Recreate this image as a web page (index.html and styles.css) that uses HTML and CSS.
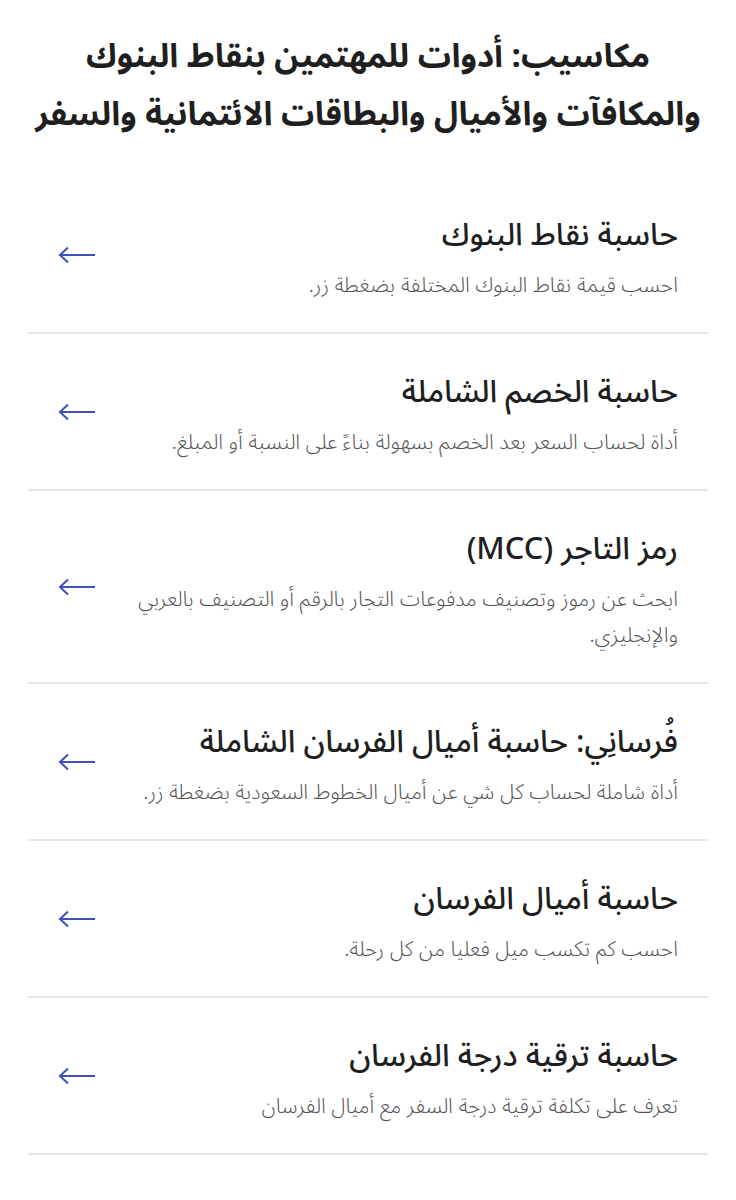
FILE: index.html
```html
<!DOCTYPE html>
<html lang="ar" dir="rtl">
<head>
<meta charset="utf-8" />
<title>مكاسيب: أدوات</title>
<link rel="stylesheet" href="styles.css">
</head>
<body>

<main class="page">
	<h1 class="page-title">مكاسيب: أدوات للمهتمين بنقاط البنوك<br>والمكافآت والأميال والبطاقات الائتمانية والسفر</h1>

	<ul class="tools">
		<li>
			<a class="tool" href="#">
				<div class="tool-text">
					<h2>حاسبة نقاط البنوك</h2>
					<p>احسب قيمة نقاط البنوك المختلفة بضغطة زر.</p>
				</div>
				<span class="arrow"><svg viewBox="0 0 38 18"><path d="M37 9H2M10 1.5L2 9L10 16.5"/></svg></span>
			</a>
		</li>
		<li>
			<a class="tool" href="#">
				<div class="tool-text">
					<h2>حاسبة الخصم الشاملة</h2>
					<p>أداة لحساب السعر بعد الخصم بسهولة بناءً على النسبة أو المبلغ.</p>
				</div>
				<span class="arrow"><svg viewBox="0 0 38 18"><path d="M37 9H2M10 1.5L2 9L10 16.5"/></svg></span>
			</a>
		</li>
		<li>
			<a class="tool" href="#">
				<div class="tool-text">
					<h2>رمز التاجر (MCC)</h2>
					<p>ابحث عن رموز وتصنيف مدفوعات التجار بالرقم أو التصنيف بالعربي والإنجليزي.</p>
				</div>
				<span class="arrow"><svg viewBox="0 0 38 18"><path d="M37 9H2M10 1.5L2 9L10 16.5"/></svg></span>
			</a>
		</li>
		<li>
			<a class="tool" href="#">
				<div class="tool-text">
					<h2>فُرسانِي: حاسبة أميال الفرسان الشاملة</h2>
					<p>أداة شاملة لحساب كل شي عن أميال الخطوط السعودية بضغطة زر.</p>
				</div>
				<span class="arrow"><svg viewBox="0 0 38 18"><path d="M37 9H2M10 1.5L2 9L10 16.5"/></svg></span>
			</a>
		</li>
		<li>
			<a class="tool" href="#">
				<div class="tool-text">
					<h2>حاسبة أميال الفرسان</h2>
					<p>احسب كم تكسب ميل فعليا من كل رحلة.</p>
				</div>
				<span class="arrow"><svg viewBox="0 0 38 18"><path d="M37 9H2M10 1.5L2 9L10 16.5"/></svg></span>
			</a>
		</li>
		<li>
			<a class="tool" href="#">
				<div class="tool-text">
					<h2>حاسبة ترقية درجة الفرسان</h2>
					<p>تعرف على تكلفة ترقية درجة السفر مع أميال الفرسان</p>
				</div>
				<span class="arrow"><svg viewBox="0 0 38 18"><path d="M37 9H2M10 1.5L2 9L10 16.5"/></svg></span>
			</a>
		</li>
	</ul>
</main>

</body>
</html>
```

FILE: styles.css
```css
body {
	margin: 0;
	background: #fff;
	color: #1f1f1f;
	font-family: "Noto Sans Arabic", "Noto Sans", "DejaVu Sans", sans-serif;
}

.page {
	padding: 28px 28px 0;
}

.page-title {
	margin: 0 0 33px;
	font-size: 33px;
	font-weight: 700;
	line-height: 58px;
	text-align: center;
}

/* --------------------------------- */

.tools {
	list-style: none;
	margin: 0;
	padding: 0;
}
.tools li {
	border-bottom: 2px solid #e6e6e6;
}

.tool {
	display: flex;
	align-items: center;
	gap: 22px;
	padding: 36px 30px 29px;
	color: inherit;
	text-decoration: none;
}

.tool-text {
	flex: 1;
}
.tool-text h2 {
	margin: 0 0 10px;
	font-size: 31px;
	font-weight: 500;
	line-height: 44px;
}
.tool-text p {
	margin: 0;
	font-size: 21px;
	font-weight: 300;
	line-height: 36px;
	color: #555;
}

.arrow {
	flex: none;
	width: 38px;
	margin-bottom: 6px;
}
.arrow svg {
	display: block;
	width: 38px;
	height: 18px;
	fill: none;
	stroke: #3f51b5;
	stroke-width: 2;
}
```
